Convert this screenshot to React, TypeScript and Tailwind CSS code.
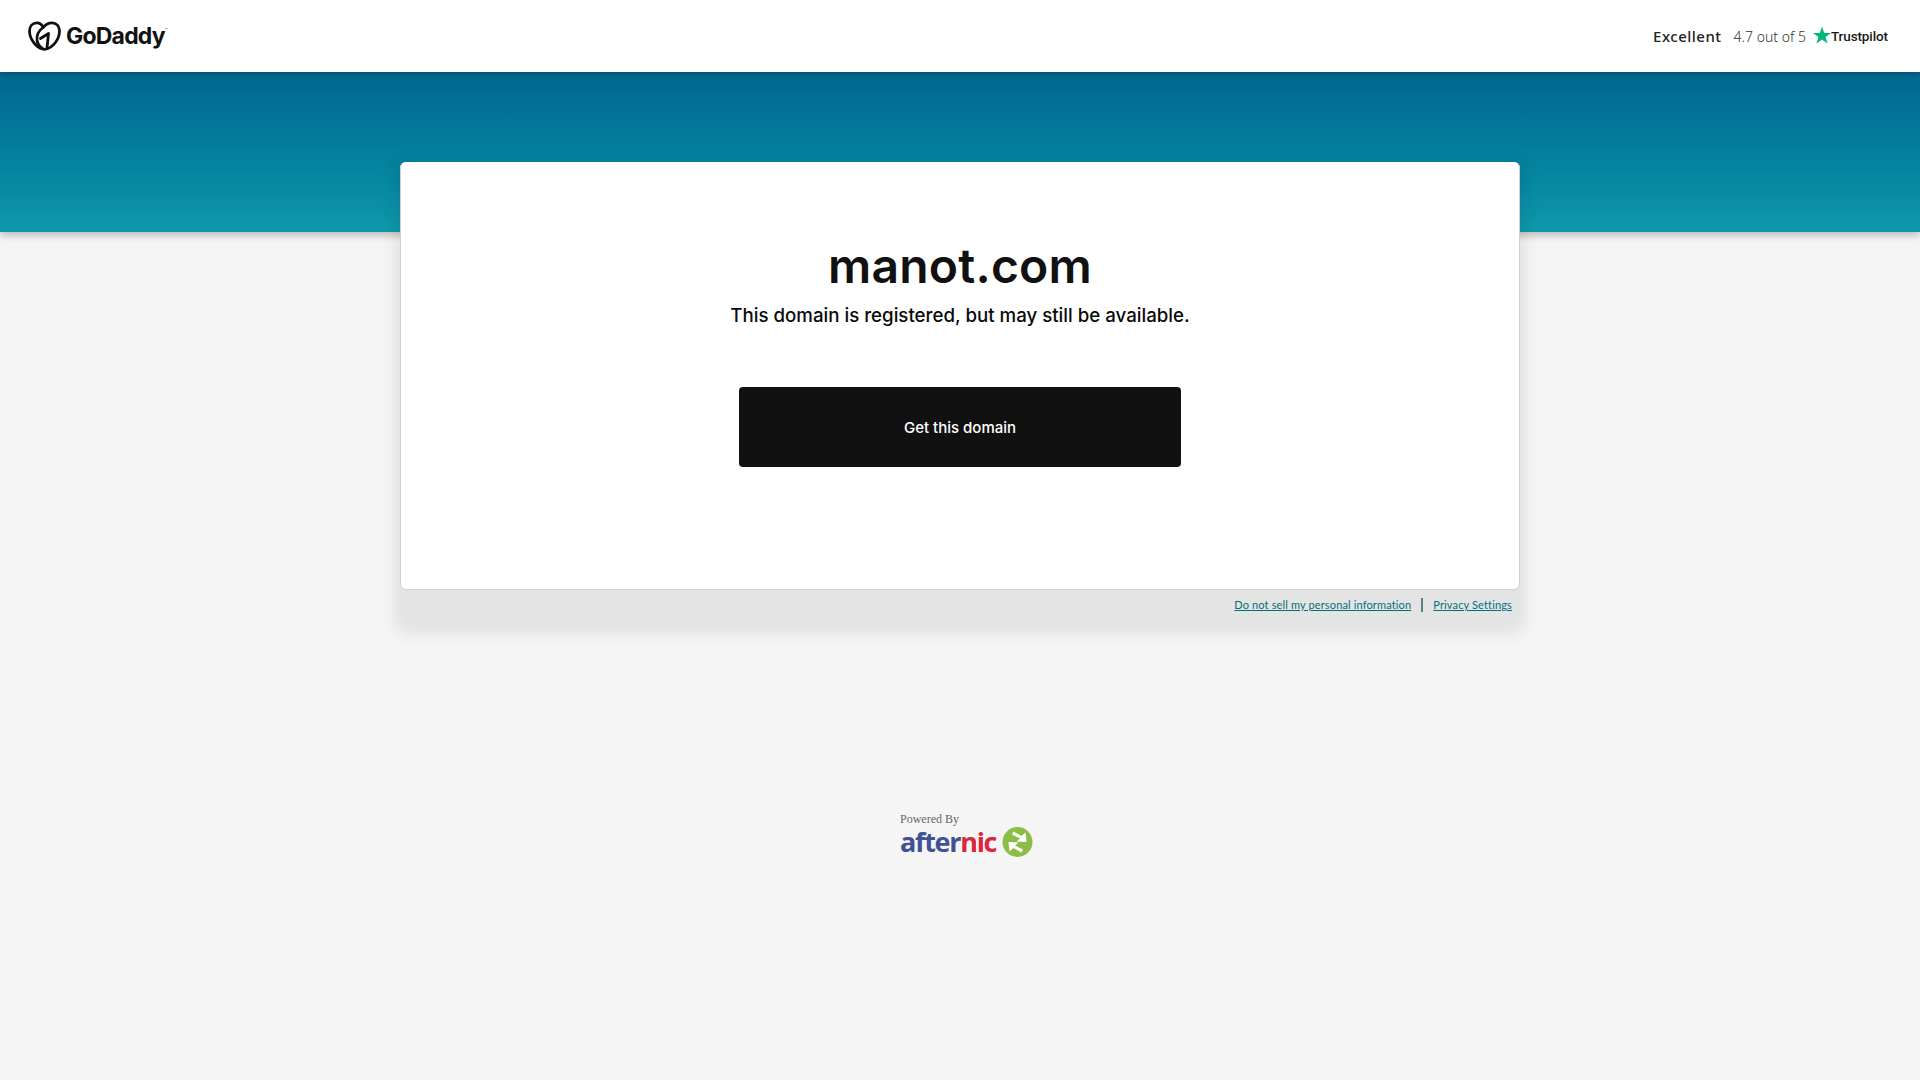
const GoDaddyHeart = () => (
  <svg width="33" height="30" viewBox="0 0 33 30" fill="none" stroke="#111111" strokeWidth="2.800" strokeLinecap="round" strokeLinejoin="round">
    <path d="M9 1.800C4.500 1.800 1.500 5.300 1.500 10c0 8.500 7 16.500 13 18 1.500.4 2.700.4 4 0 6.500-1.800 13-9.500 13-18 0-4.700-3-8.200-7.500-8.200-3.500 0-6.500 1.700-8.500 4.500C13.800 3.500 12 1.800 9 1.800Z" />
    <path d="M15 6.500C11 9.500 8.500 14 9 19c.4 3.500 2.500 6.500 5.500 8.500" />
    <path d="M12.500 17.500l8-5-1.500 14.500" />
  </svg>
);

const Star = () => (
  <svg width="18" height="18" viewBox="0 0 24 24" fill="#00b67a">
    <path d="M12 1l2.900 8.400H24l-7.300 5.300 2.800 8.600L12 18l-7.500 5.300 2.800-8.600L0 9.400h9.100z" />
  </svg>
);

const AfternicMark = () => (
  <svg width="31" height="30" viewBox="0 0 30 30">
    <circle cx="15" cy="15" r="15" fill="#8cbd47" />
    <path d="M11 4.500l8 4.500 4-3.500 1 9.500-10-.5 3.500-3-8-4z" fill="#ffffff" />
    <path d="M19 25.500l-8-4.500-4 3.500-1-9.500 10 .5-3.500 3 8 4z" fill="#ffffff" />
  </svg>
);

export default function App() {
  return (
    <div className="min-h-[1080px] w-full bg-[#f5f5f5] font-['Inter',sans-serif] text-[#111111]">
      {/* top bar */}
      <header className="h-[72px] bg-white flex items-center justify-between pl-[28px] pr-[32px] relative z-10 shadow-[0_1px_6px_rgba(0,0,0,0.25)]">
        <div className="flex items-center gap-[5px]">
          <GoDaddyHeart />
          <span className="font-bold text-[23px] tracking-[-0.8px] leading-none mt-[1px]">GoDaddy</span>
          <span className="-ml-[5px] -mt-[12px] text-[5px] leading-none text-[#666666]">™</span>
        </div>
        <div className="flex items-center text-[#333333]">
          <span className="font-['Noto_Sans',sans-serif] font-medium text-[15px] tracking-[0.5px] text-[#222222]">Excellent</span>
          <span className="font-['Noto_Sans',sans-serif] text-[14px] ml-[12px] font-light">4.7 out of 5</span>
          <span className="ml-[7px] -mt-[3px]"><Star /></span>
          <span className="font-['Roboto',sans-serif] font-medium text-[13.500px] tracking-[-0.1px] text-[#191919] mt-[1px]">Trustpilot</span>
        </div>
      </header>

      {/* teal band */}
      <div className="h-[160px] bg-gradient-to-b from-[#00668f] to-[#0e99ab] shadow-[0_3px_8px_rgba(0,0,0,0.25)]" />

      {/* main card */}
      <main className="relative w-[1120px] mx-auto -mt-[70px] bg-[#e4e4e4] rounded-[6px] shadow-[0_6px_16px_6px_rgba(0,0,0,0.08)]">
        <div className="h-[428px] bg-white rounded-[6px] border border-[#cfd2d4] border-t-0 flex flex-col items-center pt-[75px]">
          <h1 className="text-[48px] font-semibold leading-[58px] tracking-[0.2px] text-[#111111]">manot.com</h1>
          <p className="mt-[6px] text-[18.700px] font-medium leading-[30px] text-[#0a0a0a]">This domain is registered, but may still be available.</p>
          <button className="mt-[56px] w-[442px] h-[80px] pt-[3px] bg-[#111111] text-white rounded-[4px] text-[15px] font-medium">Get this domain</button>
        </div>
        <div className="h-[32px] flex items-start justify-end pr-[8px] pt-[8px] text-[11px] leading-[14px] text-[#00707c] font-['Lato',sans-serif] tracking-[0.14px]">
          <a className="underline">Do not sell my personal information</a>
          <span className="mx-[10px] w-[2px] h-[14px] bg-[#5d7f88]" />
          <a className="underline">Privacy Settings</a>
        </div>
      </main>

      {/* powered by */}
      <div className="mt-[190px] w-[134px] ml-[900px]">
        <div className="font-['Liberation_Serif',serif] text-[12px] leading-[14px] text-[#666666]">Powered By</div>
        <div className="flex items-center mt-[1px] gap-[6px]">
          <span className="font-['Open_Sans',sans-serif] font-bold text-[27px] leading-[28px] tracking-[-1.300px] text-[#3f5293]">after<span className="text-[#d9283e]">nic</span></span>
          <AfternicMark />
        </div>
      </div>
    </div>
  );
}
